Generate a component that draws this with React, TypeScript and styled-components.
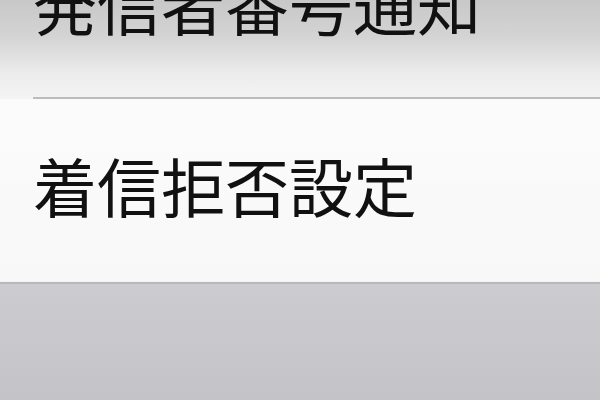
import styled, { createGlobalStyle } from 'styled-components';

const Global = createGlobalStyle`
  html, body {
    margin: 0;
    padding: 0;
  }
  body {
    font-family: "Noto Sans CJK JP", "Noto Sans", sans-serif;
    background: #d4d4d8;
  }
`;

const Screen = styled.div`
  width: 600px;
  height: 400px;
  overflow: hidden;
  background: linear-gradient(#e0e0e4, #c4c4c8);
`;

// the list is scrolled, so the first row starts above the window
const Group = styled.ul`
  list-style: none;
  margin: -83px 0 0;
  padding: 0;
  background: #f9f9f9;
  border-bottom: 1px solid #f2f2f2;
  box-shadow: 0 2px 0 #b9b9bc;
`;

const Cell = styled.li<{ $selected?: boolean; $last?: boolean }>`
  position: relative;
  height: 182px;
  display: flex;
  align-items: center;
  padding-left: 33px;
  box-sizing: border-box;
  background: ${(p) =>
    p.$selected
      ? 'linear-gradient(#b4b4b4 0%, #c8c8c8 46%, #d4d4d4 66%, #ececec 86%, #f4f4f4 100%)'
      : 'linear-gradient(#fbfbfb, #f8f8f8)'};

  &::after {
    content: '';
    display: ${(p) => (p.$last ? 'none' : 'block')};
    position: absolute;
    left: 33px;
    right: 0;
    bottom: 0;
    height: 2px;
    background: #bcbcbe;
  }
`;

const Label = styled.span`
  font-size: 64px;
  line-height: 1;
  color: #111;
  margin-top: -12px;
`;

const items = [
  { label: '発信者番号通知', selected: true },
  { label: '着信拒否設定', selected: false },
];

export default function App() {
  return (
    <>
      <Global />
      <Screen>
        <Group>
          {items.map((it, i) => (
            <Cell key={it.label} $selected={it.selected} $last={i === items.length - 1}>
              <Label>{it.label}</Label>
            </Cell>
          ))}
        </Group>
      </Screen>
    </>
  );
}
